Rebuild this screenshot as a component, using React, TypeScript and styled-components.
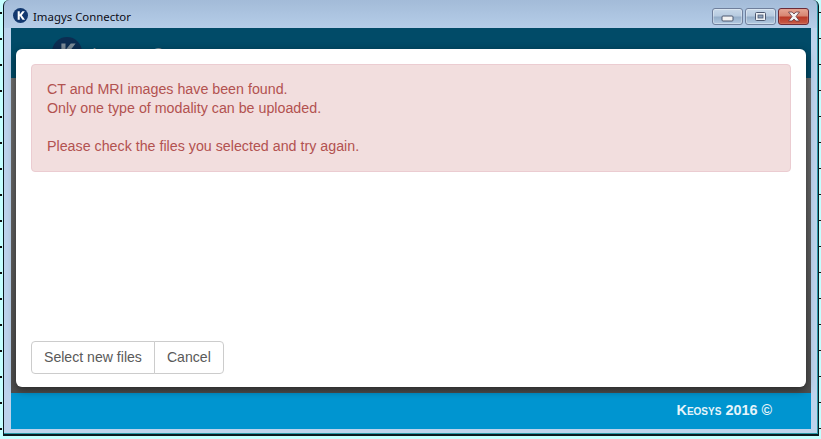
import React from "react";
import styled, { createGlobalStyle } from "styled-components";

const Global = createGlobalStyle`
  html, body { margin: 0; padding: 0; background: #c4ffff; }
  * { box-sizing: border-box; }
`;

const Desktop = styled.div`
  width: 821px;
  height: 439px;
  overflow: hidden;
  padding: 0 2px 3px 3px;
  background-color: #c4ffff;
  background-image:
    linear-gradient(#111 0, #111 2px, transparent 2px),
    linear-gradient(#111 0, #111 1px, transparent 1px);
  background-size: 2px 26px, 3px 26px;
  background-position: 0 12px, right 0 top 12px;
  background-repeat: repeat-y, repeat-y;
`;

const Frame = styled.div`
  width: 816px;
  height: 436px;
  border: solid #0a1a20;
  border-width: 0 1px 2px 1px;
  border-top-left-radius: 6px;
  border-top-right-radius: 6px;
  box-shadow: inset -1px -1px 0 #2a9aa8;
  background: linear-gradient(180deg, #a3bbd8 0, #b5cde8 28px, #bcd3ec 28px);
  padding: 0 7px 5px 7px;
  display: flex;
  flex-direction: column;
`;

const TitleBar = styled.div`
  height: 28px;
  flex: none;
  display: flex;
  justify-content: space-between;
`;

const TitleLeft = styled.div`
  display: flex;
  align-items: flex-start;
  gap: 5px;
  padding: 8px 0 0 2px;
`;

const TitleText = styled.span`
  font: 11.4px/14px "Noto Sans", "Open Sans", sans-serif;
  color: #0c0c16;
  margin-top: 2px;
`;

const WindowButtons = styled.div`
  display: flex;
  gap: 2px;
  align-self: flex-start;
  margin-top: 8px;
  margin-right: 2px;
`;

const WinButton = styled.div<{ $close?: boolean }>`
  width: 31px;
  height: 17px;
  border-radius: 3px;
  border: 1px solid ${(p) => (p.$close ? "#6b2b38" : "#6f7f9c")};
  box-shadow: inset 0 0 0 1px ${(p) => (p.$close ? "#e49a8a55" : "#ffffff55")};
  background: ${(p) =>
    p.$close
      ? "linear-gradient(180deg, #e6a594 0, #d88672 45%, #bb3a28 55%, #c75c48 100%)"
      : "linear-gradient(180deg, #c9d9ea 0, #b7cbe0 45%, #95aec9 55%, #b4cbe2 100%)"};
  display: flex;
  align-items: center;
  justify-content: center;
`;

const Content = styled.div`
  flex: 1;
  display: flex;
  flex-direction: column;
  position: relative;
  background: #5a5a5a;
`;

const Header = styled.div`
  height: 50px;
  flex: none;
  background: #014b68;
  padding: 9px 0 0 41px;
  display: flex;
  align-items: flex-start;
  gap: 10px;
`;

const HeaderTitle = styled.span`
  font: 17px/20px "Liberation Sans", sans-serif;
  color: #7f929e;
  margin-top: 8px;
`;

const Body = styled.div`
  flex: 1;
  background: linear-gradient(180deg, #6e6e6e 0, #4e4e4e 100%);
`;

const Footer = styled.div`
  height: 36px;
  flex: none;
  background: #0095d0;
  display: flex;
  align-items: center;
  justify-content: flex-end;
  padding: 0 39px 3px 0;
`;

const FooterText = styled.span`
  font: 700 14.4px/16px "Liberation Sans", sans-serif;
  font-variant: small-caps;
  color: #e6f4fa;
`;

const Modal = styled.div`
  position: absolute;
  left: 5px;
  right: 5px;
  top: 21px;
  height: 338px;
  background: #fff;
  border-radius: 6px;
  padding: 15px;
  display: flex;
  flex-direction: column;
  justify-content: space-between;
  box-shadow: 0 3px 9px rgba(0, 0, 0, 0.5);
`;

const Alert = styled.div`
  height: 108px;
  padding: 15px;
  background: #f2dede;
  border: 1px solid #ebccd1;
  border-radius: 4px;
  color: #b25250;
  font: 14.25px/19px "Liberation Sans", sans-serif;
`;

const ButtonGroup = styled.div`
  display: flex;
  margin-bottom: -2px;
`;

const Button = styled.button<{ $first?: boolean }>`
  height: 33px;
  padding: 0 12px 2px;
  background: #fff;
  border: 1px solid #ccc;
  font: 14.1px/20px "Liberation Sans", sans-serif;
  color: #5a5a5a;
  border-radius: ${(p) => (p.$first ? "4px 0 0 4px" : "0 4px 4px 0")};
  margin-left: ${(p) => (p.$first ? "0" : "-1px")};
`;

const Logo = ({ size }: { size: number }) => (
  <svg width={size} height={size} viewBox="0 0 16 16" style={{ flex: "none" }}>
    <circle cx="8" cy="8" r="8" fill="#12386f" />
    <path d="M5 3.5h2.2v3.4L10 3.5h2.6L9.4 7.6l3.4 4.9h-2.7L7.2 8.3v4.2H5z" fill="#fff" />
  </svg>
);

const HeaderLogo = () => (
  <svg width="30" height="30" viewBox="0 0 16 16" style={{ flex: "none" }}>
    <circle cx="8" cy="8" r="8" fill="#0c2d52" />
    <path d="M5 3.5h2.2v3.4L10 3.5h2.6L9.4 7.6l3.4 4.9h-2.7L7.2 8.3v4.2H5z" fill="#7b8a96" />
  </svg>
);

export default function App() {
  return (
    <Desktop>
      <Global />
      <Frame>
        <TitleBar>
          <TitleLeft>
            <Logo size={15} />
            <TitleText>Imagys Connector</TitleText>
          </TitleLeft>
          <WindowButtons>
            <WinButton>
              <svg width="13" height="7" viewBox="0 0 13 7" style={{ marginTop: 3 }}>
                <rect x="1" y="1" width="11" height="5" rx="1" fill="#f2f2f2" stroke="#4c5870" />
              </svg>
            </WinButton>
            <WinButton>
              <svg width="13" height="11" viewBox="0 0 13 11">
                <rect x="1.5" y="1.5" width="10" height="8" rx="1" fill="#eef2f6" stroke="#4c5870" />
                <rect x="4" y="4" width="5" height="3" fill="#8ea4bd" stroke="#4c5870" strokeWidth="0.8" />
              </svg>
            </WinButton>
            <WinButton $close>
              <svg width="14" height="11" viewBox="0 0 14 11">
                <path d="M1.5 1h3.6L7 3l1.9-2h3.6L9 5.5l3.5 4.5H8.9L7 8 5.1 10H1.5L5 5.5z" fill="#f3f3f3" stroke="#5f3640" strokeWidth="0.8" />
              </svg>
            </WinButton>
          </WindowButtons>
        </TitleBar>
        <Content>
          <Header>
            <HeaderLogo />
            <HeaderTitle>Imagys Connector</HeaderTitle>
          </Header>
          <Body />
          <Footer>
            <FooterText>Keosys 2016 ©</FooterText>
          </Footer>
          <Modal>
            <Alert>
              CT and MRI images have been found.
              <br />
              Only one type of modality can be uploaded.
              <br />
              <br />
              Please check the files you selected and try again.
            </Alert>
            <ButtonGroup>
              <Button $first>Select new files</Button>
              <Button>Cancel</Button>
            </ButtonGroup>
          </Modal>
        </Content>
      </Frame>
    </Desktop>
  );
}
